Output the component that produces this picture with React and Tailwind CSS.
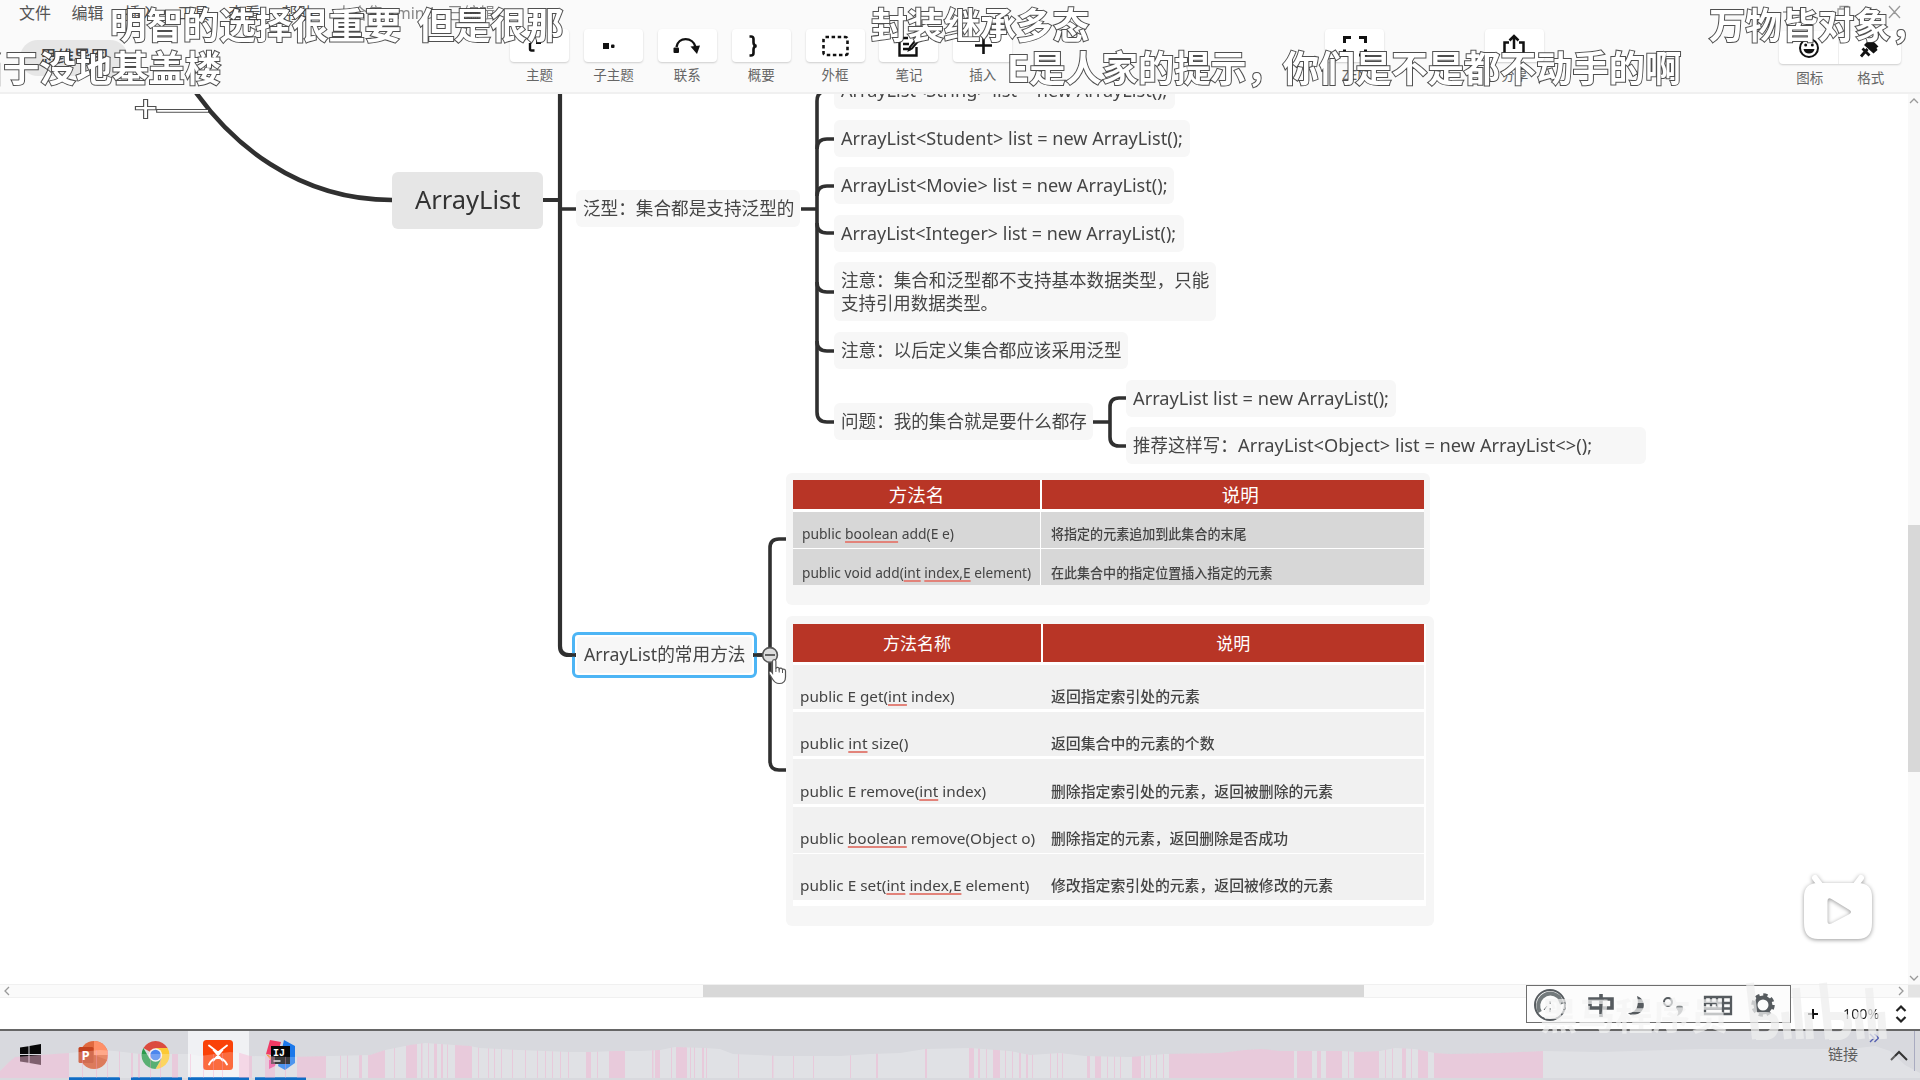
import { useLayoutEffect, useRef, useState } from "react";

/* Text squeezed or stretched horizontally to a given width. */
function Fit({ w, children, className = "" }) {
  const ref = useRef(null);
  const [scale, setScale] = useState(1);
  useLayoutEffect(() => {
    if (w && ref.current) setScale(w / ref.current.offsetWidth);
  }, [w]);
  return (
    <span className={`block ${className}`} style={{ width: w }}>
      <span ref={ref} className="inline-block origin-left whitespace-pre" style={{ transform: `scaleX(${scale})` }}>
        {children}
      </span>
    </span>
  );
}

const nodes = [
  { x: 834, y: 72, w: 341, h: 37, t: "ArrayList<String> list = new ArrayList();", tw: 326 },
  { x: 834, y: 120, w: 356, h: 37, t: "ArrayList<Student> list = new ArrayList();", tw: 342 },
  { x: 834, y: 167, w: 340, h: 37, t: "ArrayList<Movie> list = new ArrayList();", tw: 327 },
  { x: 834, y: 215, w: 350, h: 37, t: "ArrayList<Integer> list = new ArrayList();", tw: 335 },
  { x: 834, y: 332, w: 294, h: 37, t: "注意：以后定义集合都应该采用泛型", tw: 281 },
  { x: 834, y: 403, w: 259, h: 37, t: "问题：我的集合就是要什么都存", tw: 246 },
  { x: 576, y: 190, w: 224, h: 37, t: "泛型：集合都是支持泛型的", tw: 211 },
  { x: 1126, y: 380, w: 270, h: 37, t: "ArrayList list = new ArrayList();", tw: 256 },
];

function Node({ n }) {
  return (
    <div
      className="absolute flex items-center rounded-md bg-[#f7f7f7] pl-[7px] text-[17.8px] text-[#454545]"
      style={{ left: n.x, top: n.y, width: n.w, height: n.h }}
    >
      <Fit w={n.tw}>{n.t}</Fit>
    </div>
  );
}

function Links() {
  return (
    <svg className="absolute left-0 top-0" width="1908" height="984" fill="none" stroke="#303030" strokeWidth="3.6">
      <path strokeWidth="4.6" d="M190 82L197 94C230 140 295 200 392 200" />
      <path strokeWidth="4.2" d="M543 200H560M560 80V646Q560 655 569 655H576" />
      <path d="M560 209H576M801 209H817" />
      <path d="M834 91H827Q817 91 817 101V412Q817 422 827 422H834" />
      <path d="M817 149Q817 139 827 139H834M817 196Q817 186 827 186H834M817 223Q817 233 827 233H834M817 282Q817 292 827 292H834M817 341Q817 351 827 351H834" />
      <path d="M1093 422H1110M1126 398H1119Q1110 398 1110 407V437Q1110 446 1119 446H1126" />
      <path d="M753 655H770M786 539H779Q770 539 770 548V761Q770 770 779 770H786" />
    </svg>
  );
}

const U = ({ children }) => (
  <span className="underline decoration-[#e2837a] decoration-[1.5px] underline-offset-[2px]">{children}</span>
);

const addRows = [
  { w: 152, a: <>public <U>boolean</U> add(E e)</>, b: "将指定的元素追加到此集合的末尾", bw: 196, cls: "h-[36px] pt-[8px]" },
  { w: 229, a: <>public void add(<U>int</U> <U>index,E</U> element)</>, b: "在此集合中的指定位置插入指定的元素", bw: 222, cls: "h-[36px] pt-[10px]" },
];

const otherRows = [
  { w: 155, a: <>public E get(<U>int</U> index)</>, b: "返回指定索引处的元素", bw: 149, cls: "h-[44px] pt-[19px] mb-[3px]" },
  { w: 108, a: <>public <U>int</U> size()</>, b: "返回集合中的元素的个数", bw: 164, cls: "h-[44px] pt-[19px] mb-[3px]" },
  { w: 186, a: <>public E remove(<U>int</U> index)</>, b: "删除指定索引处的元素，返回被删除的元素", bw: 282, cls: "h-[45px] pt-[20px] mb-[3px]" },
  { w: 235, a: <>public <U>boolean</U> remove(Object o)</>, b: "删除指定的元素，返回删除是否成功", bw: 237, cls: "h-[46px] pt-[19px] mb-px" },
  { w: 229, a: <>public E set(<U>int</U> <U>index,E</U> element)</>, b: "修改指定索引处的元素，返回被修改的元素", bw: 282, cls: "h-[46px] pt-[19px]" },
];

function MethodTables() {
  return (
    <>
      <div className="absolute left-[786px] top-[473px] h-[132px] w-[644px] rounded-md bg-[#f6f6f6] pl-[7px] pt-[7px]">
        <div className="w-[631px] bg-white">
          <div className="mb-[3px] flex h-[29px] items-center gap-[1.5px] text-[18.5px] text-white">
            <div className="flex h-full w-[247px] items-center justify-center bg-[#b83526]">方法名</div>
            <div className="flex h-full flex-1 items-center justify-center bg-[#b83526] pl-[15px]">说明</div>
          </div>
          <div className="flex flex-col gap-px text-[13.5px] leading-[28px] text-[#444]">
            {addRows.map((r, i) => (
              <div key={i} className="flex gap-px">
                <div className={`w-[247px] bg-[#d7d7d7] pl-[9px] ${r.cls}`}><Fit w={r.w}>{r.a}</Fit></div>
                <div className={`flex-1 bg-[#d7d7d7] pl-[10px] font-medium ${r.cls}`}><Fit w={r.bw}>{r.b}</Fit></div>
              </div>
            ))}
          </div>
        </div>
      </div>
      <div className="absolute left-[786px] top-[616px] h-[310px] w-[648px] rounded-md bg-[#f6f6f6] pl-[7px] pt-[8px]">
        <div className="w-[633px] bg-white pb-[6px]">
          <div className="mb-[3px] flex h-[38px] items-center gap-[1.5px] pr-[2px] text-[17px] text-white">
            <div className="flex h-full w-[248px] items-center justify-center bg-[#b83526] pt-[2px]">方法名称</div>
            <div className="flex h-full flex-1 items-center justify-center bg-[#b83526] pt-[2px]">说明</div>
          </div>
          <div className="pr-[2px] text-[14.7px] leading-[24px] text-[#444]">
            {otherRows.map((r, i) => (
              <div key={i} className={`flex bg-[#f1f1f1] ${r.cls}`}>
                <div className="w-[250px] pl-[7px]"><Fit w={r.w}>{r.a}</Fit></div>
                <div className="flex-1 pl-[8px] font-medium"><Fit w={r.bw}>{r.b}</Fit></div>
              </div>
            ))}
          </div>
        </div>
      </div>
    </>
  );
}

function MindMap() {
  return (
    <div className="absolute left-0 top-[-94px] h-[984px] w-[1908px]">
      <Links />
      <div className="absolute left-[392px] top-[172px] flex h-[57px] w-[151px] items-center rounded-md bg-[#e6e6e6] pb-[2px] pl-[23px] text-[25px] text-[#333]">
        <Fit w={105}>ArrayList</Fit>
      </div>
      {nodes.map((n) => <Node key={n.t} n={n} />)}
      <div className="absolute left-[1126px] top-[427px] flex h-[37px] w-[520px] items-center rounded-md bg-[#f7f7f7] pl-[7px] text-[17.8px] text-[#454545]">
        <Fit w={105}>推荐这样写：</Fit>
        <Fit w={354}>{"ArrayList<Object> list = new ArrayList<>();"}</Fit>
      </div>
      <div className="absolute left-[834px] top-[262px] h-[59px] w-[382px] rounded-md bg-[#f7f7f7] pl-[7px] pt-[7px] text-[17.8px] leading-[23px] text-[#454545]">
        <Fit w={368}>注意：集合和泛型都不支持基本数据类型，只能</Fit>
        <Fit w={157}>支持引用数据类型。</Fit>
      </div>
      <div className="absolute left-[572px] top-[632px] flex h-[46px] w-[185px] rounded-md border-[3px] border-[#4db5f5] p-[2px]">
        <div className="flex flex-1 items-center rounded bg-[#f7f7f7] pb-[2px] pl-[7px] text-[17.8px] text-[#454545]">
          <Fit w={162}>ArrayList的常用方法</Fit>
        </div>
      </div>
      <MethodTables />
      <svg className="absolute left-[560px] top-[640px]" width="240" height="50" fill="none">
        <path d="M10 15H16M193 15H203" stroke="#303030" strokeWidth="3.4" />
        <circle cx="210" cy="15" r="7.4" fill="#dedede" stroke="#555" strokeWidth="1.6" />
        <path d="M205 15h10" stroke="#444" strokeWidth="1.6" />
        <g transform="translate(1.5 -1)">
          <path
            d="M211 22.5c0-2.6 3.4-2.6 3.4 0v7c.5-1.7 3.2-1.5 3.3.4.8-1.4 3.1-1 3.3.7.9-1 3-.5 3 1.3v6c0 4-2.3 6.6-6.4 6.6-3.5 0-5-1.6-6.6-4.5l-3.2-5.2c-1.2-2 1.2-3.3 2.500-1.7l.7 1z"
            fill="#fff" stroke="#555" strokeWidth="1.2"
          />
          <path d="M214.400 29v4M217.700 30v3.500M221 31v3" stroke="#555" />
        </g>
      </svg>
    </div>
  );
}

/* ---------- toolbar ---------- */
const Svg = ({ children, w = 30, h = 26, ...p }) => (
  <svg width={w} height={h} viewBox={`0 0 ${w} ${h}`} fill="none" stroke="#111" strokeWidth="2.4" {...p}>{children}</svg>
);

const tools = [
  ["主题", <Svg><path d="M5 10v6q0 1.500 1.500 1.500H9.500" /><rect x="11" y="7" width="5" height="4" fill="#111" stroke="none" /></Svg>],
  ["子主题", <Svg><rect x="5" y="10" width="6" height="6" fill="#111" stroke="none" /><rect x="13" y="11.500" width="3.500" height="3.500" rx="1" fill="#111" stroke="none" /></Svg>],
  ["联系", <Svg><rect x="1.500" y="14.500" width="5.500" height="5.500" rx="1" fill="#111" stroke="none" /><path d="M4.500 14C6 3.500 21 3.500 23.500 14" /><path d="M18.500 13.500l9.500-1-3 8.500z" fill="#111" stroke="none" /></Svg>],
  ["概要", <Svg><path d="M3.500 3.500H5q2.500 0 2.500 2.500v3.500q0 3 3 3.500-3 .5-3 3.500V20q0 2.500-2.500 2.500H3.500" strokeWidth="2.600" /></Svg>],
  ["外框", <Svg><rect x="3.500" y="4" width="24" height="18" rx="2" strokeWidth="2.600" strokeDasharray="3.500 2.600" /></Svg>],
  ["笔记", <Svg><path d="M14 5H5.500v17.500h17V14M9 11h6M9 16h8" /><path d="M24 4.500l-8 9.500-1 3 3-1.500 8-9.500" strokeWidth="2" /></Svg>],
  ["插入", <Svg><path d="M15.500 4v17M7 12.500h17" strokeWidth="2.600" /></Svg>],
];

function Tool({ label, icon }) {
  return (
    <div className="flex w-[59px] flex-col items-center">
      <div className="flex h-[33px] w-full items-center justify-center rounded-sm bg-white shadow-[0_1px_2px_rgba(0,0,0,0.18)]">{icon}</div>
      <div className="mt-[4px] text-[13.5px] leading-[18px] text-[#666]">{label}</div>
    </div>
  );
}

function Header() {
  return (
    <header className="h-[94px] border-b-[2px] border-[#f0f0f0] bg-[#fafafa]">
      <div className="flex h-[29px] items-start justify-between pl-[19px] pr-[19px] text-[16px] leading-[26px] text-[#555]">
        <div className="flex">
          <span className="w-[52.5px]">文件</span><span className="w-[53px]">编辑</span>
          <span className="w-[53px]">插入</span><span className="w-[51px]">工具</span>
          <span className="w-[53px]">查看</span><span className="w-[54px]">帮助</span>
          <Fit w={159} className="text-[#888]">大合集.xmind - 已编辑</Fit>
        </div>
        <svg className="mt-[5px]" width="120" height="14" fill="none" stroke="#999" strokeWidth="1.3">
          <path d="M2 7h11M108 1l11 12M119 1l-11 12M57 4h8v8h-8zM59 4V1.500h8V10h-2" />
        </svg>
      </div>
      <div className="flex">
        <div className="ml-[20px] mt-[11px] flex h-[36px] w-[108px] items-center justify-center rounded-full bg-[#e6e6e6] pb-[2px] text-[17px] font-medium text-[#444]">思维导图</div>
        <div className="ml-[382px] flex gap-[14.9px]">
          {tools.map(([label, icon]) => <Tool key={label} label={label} icon={icon} />)}
        </div>
        <div className="ml-[313px]">
          <Tool label="ZEN" icon={<Svg><path d="M4.500 10V4.500H11M19 4.500h6.500V10M25.500 16.500V22H19M11 22H4.500v-5.500" strokeWidth="3" /></Svg>} />
        </div>
        <div className="ml-[101px]">
          <Tool label="分享" icon={<Svg><path d="M9 9.500H4.500v12.500h19V9.500H19M14 16V3M9.500 7.500L14 3 18.500 7.500" strokeWidth="2.500" /></Svg>} />
        </div>
        <div className="ml-[235px] mt-[2px] w-[122px]">
          <div className="flex h-[33px] rounded-sm bg-white shadow-[0_1px_2px_rgba(0,0,0,0.18)]">
            <div className="flex w-[60px] items-center justify-center border-r border-[#eee]">
              <Svg w={24} h={24}><circle cx="12" cy="12" r="9" strokeWidth="2" /><path d="M6.500 13h11c-.8 6-10.200 6-11 0z" fill="#111" stroke="none" /><circle cx="8.700" cy="9" r="1.500" fill="#111" stroke="none" /><circle cx="15.300" cy="9" r="1.500" fill="#111" stroke="none" /></Svg>
            </div>
            <div className="flex flex-1 items-center justify-center">
              <Svg w={24} h={24}><path d="M13 3l7.500 7.500-2 1.500 1 2-4 3.500L6 9l4-4 2 .5z" fill="#111" stroke="none" /><path d="M9.500 13L3 20.500M4.500 12.500l7 7" strokeWidth="2.800" /></Svg>
            </div>
          </div>
          <div className="mt-[5px] flex text-[13.5px] leading-[18px] text-[#666]">
            <div className="w-[61px] text-center">图标</div><div className="flex-1 text-center">格式</div>
          </div>
        </div>
      </div>
    </header>
  );
}

/* ---------- taskbar ---------- */
const wave =
  "0,40 8,32 15,26 40,24 69,22 100,19 115,20 140,23 190,23 200,25 230,21 240,22 250,25 290,26 330,25 370,24 385,19 410,14 425,12 470,15 480,17 520,19 570,21 590,21 615,20 640,20 660,19 675,16 705,17 720,18 733,23 780,25 840,25 870,23 900,22 925,18 970,17 1010,20 1030,24 1060,22 1085,25 1130,26 1165,23 1220,22 1245,19 1262,18 1280,20 1340,20 1360,21 1380,20 1395,17 1415,18 1435,22 1450,23 1500,22 1543,20 1600,21 1700,18 1850,18 1875,15 1890,20 1905,34 1920,42 1920,47 0,47";
const pinks = [
  [0, 69], [82, 83], [96, 97], [107, 108], [119, 120], [131, 133], [138, 140], [150, 151], [160, 161], [172, 178], [190, 191], [203, 204], [213, 214], [222, 223], [239, 252], [265, 275], [285, 286], [297, 326], [340, 341], [347, 348],
  [359, 362], [368, 385], [394, 395], [406, 417], [421, 422.5], [428, 429], [434, 437], [441, 443], [447, 448], [455, 472], [478, 479], [488, 489], [494, 495], [501, 502], [512, 513], [525, 526], [537, 538], [545, 546], [552, 553], [560, 561], [568, 569], [586, 591], [597, 598], [609, 625],
  [652, 653.5], [655, 660], [671, 672], [676, 687], [690, 691], [694, 695], [702, 704], [706, 707], [738, 739], [772, 773.5], [793, 794], [813, 814], [850, 851], [876, 878], [925, 927], [969, 974], [978, 980], [986, 987], [993, 1000], [1005, 1006], [1012, 1013], [1019, 1021], [1026, 1028], [1032, 1033], [1050, 1051], [1057, 1058], [1062, 1063],
  [1087, 1090], [1095, 1101], [1107, 1108], [1114, 1115], [1120, 1121], [1132, 1141], [1144, 1145], [1150, 1151], [1156, 1157], [1163, 1164], [1169, 1294], [1297, 1312], [1317, 1321], [1326, 1342], [1348, 1349], [1354, 1379], [1385, 1386], [1392, 1393], [1402, 1406], [1411, 1412], [1418, 1428], [1434, 1543],
];

const TaskApp = ({ active, children }) => (
  <div className={active ? "flex h-[49px] w-[61px] flex-col items-center justify-between bg-[#f0f1f4] pt-[9px]" : "flex h-[49px] w-[51px] flex-col items-center justify-between pt-[9px]"}>
    {children}
    <div className="h-[3px] w-full bg-[#0f6cc4]" />
  </div>
);

function Taskbar() {
  return (
    <footer className="relative flex h-[49px] bg-[#d8d9de]">
      <div className="w-[69px] pl-[20px] pt-[13px]">
        <svg width="21" height="22" fill="#080808"><path d="M0 3.500l8.500-1.200V10H0zM9.500 2L21 0v10H9.500zM0 11h8.500v7.700L0 17.500zM9.500 11H21v10l-11.500-2z" /></svg>
      </div>
      <TaskApp>
        <svg className="-ml-[3px]" width="30" height="30">
          <circle cx="16" cy="15" r="14" fill="#e0693f" /><path d="M16 1a14 14 0 0 1 14 14H16z" fill="#ff9068" /><path d="M3 20a14 14 0 0 0 26 0l-13-5z" fill="#d2562f" />
          <rect x="0.500" y="7" width="15" height="16" rx="1.500" fill="#c4431f" />
          <text x="3.500" y="20" fontSize="13" fontWeight="700" fill="#fff" fontFamily="Open Sans">P</text>
        </svg>
      </TaskApp>
      <div className="w-[11px]" />
      <TaskApp>
        <svg className="-ml-[2px]" width="29" height="30" viewBox="0 0 29 30">
          <path d="M14.500 15L2.400 8A14 14 0 0 1 26.600 8z" fill="#db4c3f" />
          <path d="M14.500 8H26.600A14 14 0 0 1 14.500 29l6.100-10.500z" fill="#fcc934" />
          <path d="M2.400 8a14 14 0 0 0 12.100 21l6-10.500L14.500 15 8.500 18.500z" fill="#2a9a4c" />
          <circle cx="14.500" cy="15" r="6.700" fill="#f2f2f2" /><circle cx="14.500" cy="15" r="5.200" fill="#4c86ee" />
        </svg>
      </TaskApp>
      <div className="w-[6px]" />
      <TaskApp active>
        <svg className="-ml-[1.500px]" width="30" height="30"><rect width="30" height="30" rx="3.500" fill="#fa4208" /><path d="M6 5.500l9 7 9-7M6 24.500c2-4 5-6.500 9-6.500s7 2.500 9 6.500M10.500 20.500l9-10.500M19.500 20.500l-9-10.500" stroke="#fff" strokeWidth="1.900" fill="none" strokeLinecap="round" /></svg>
      </TaskApp>
      <div className="w-[6px]" />
      <TaskApp>
        <svg width="30" height="30">
          <path d="M4 0l11 2-4 14L0 14z" fill="#f03a64" /><path d="M0 14l8 4-2 4z" fill="#fb8b2e" /><path d="M18 0l11 6v17l-10 7-7-4z" fill="#1b78ea" /><path d="M3 20l8-2-2 8-6 3z" fill="#e8318c" />
          <rect x="5" y="6" width="19" height="18" fill="#060606" />
          <text x="7" y="15.500" fontSize="10" fontWeight="700" fill="#fff" fontFamily="Liberation Mono">IJ</text><path d="M7.500 21h7" stroke="#fff" strokeWidth="1.300" />
        </svg>
      </TaskApp>
      <div className="ml-auto flex pr-[12px] text-[15px] text-[#333]">
        <span className="pt-[12px]">链接</span>
        <svg className="ml-[9px]" width="41" height="40" fill="none">
          <path d="M3 3l4 4-4 4M7.500 3l4 4-4 4" stroke="#5560b0" strokeWidth="1.400" />
          <path d="M24 29l8-8 8 8" stroke="#333" strokeWidth="2" />
        </svg>
      </div>
      <svg className="absolute left-0 top-0" width="1920" height="49">
        <defs><clipPath id="wave"><polygon points={wave} /></clipPath></defs>
        <g clipPath="url(#wave)">
          <rect width="1920" height="49" fill="#fff" opacity="0.22" />
          {pinks.map(([a, b]) => <rect key={a} x={a} width={b - a} y="0" height="47" fill="rgb(246,160,200)" opacity="0.35" />)}
        </g>
        <path d="M1914.500 0v40" stroke="#a9abc0" />
      </svg>
    </footer>
  );
}

function ImeBar() {
  return (
    <div className="absolute left-[1526px] top-[985px] flex h-[38px] w-[265px] items-center border-[1.5px] border-[#6e6e6e] bg-[#fcfcfc]">
      <svg width="262" height="35" fill="none" stroke="#565b5f" strokeWidth="2.4">
        <circle cx="23" cy="18" r="15" strokeWidth="2" />
        <path d="M13 25a12 12 0 0 1 2-15q8-7 17 0l3 7" strokeWidth="4" stroke="#737a7c" />
        <path d="M17 23l3-4M23 14v3M23 21v4" strokeWidth="1" />
        <path d="M63 12h22v9H63zM74 7v23" strokeWidth="3.600" />
        <path d="M110 9c9 3 10 16-2 19-3 .6-6-.5-7-2 7 .5 12-7 9-17z" fill="#565b5f" stroke="none" />
        <circle cx="141" cy="15" r="4" strokeWidth="2" /><path d="M149 21a3.500 3.500 0 1 1 7 1q-1 5-6 7 2-3 1-5z" fill="#858a8c" stroke="none" />
        <path d="M178 10h26v17h-26zM178 16h26M178 21.500h26M184 10v12M190 10v12M196 10v17" strokeWidth="2.300" />
        <circle cx="236" cy="18" r="7.500" strokeWidth="4" /><circle cx="236" cy="18" r="10" strokeWidth="3.500" strokeDasharray="4.200 3.650" />
      </svg>
    </div>
  );
}

const outline =
  "font-bold text-white [paint-order:stroke_fill] [-webkit-text-stroke:2px_rgba(60,60,60,0.9)]";

const comments = [
  { x: 110, y: -3, w: 453, t: "明智的选择很重要  但是很那" },
  { x: 871, y: -3, w: 218, t: "封装继承多态" },
  { x: 1709, y: -3, w: 218, t: "万物皆对象，" },
  { x: -33, y: 40, w: 254, t: "当于没地基盖楼" },
  { x: 1007, y: 40, w: 674, t: "E是人家的提示，你们是不是都不动手的啊" },
  { x: 135, y: 96, w: 74, t: "十———", small: true },
];

export default function App() {
  return (
    <div className="relative flex h-[1080px] w-[1920px] flex-col overflow-hidden bg-white font-['Noto_Sans','Noto_Sans_CJK_SC',sans-serif]">
      <Header />
      <div className="flex h-[890px]">
        <main className="relative flex-1 overflow-hidden bg-white"><MindMap /></main>
        <aside className="flex w-[12px] flex-col items-center bg-[#f9f9f9]">
          <svg className="mt-[3px]" width="10" height="8" fill="none" stroke="#999" strokeWidth="1.3"><path d="M1 6l4-4 4 4" /></svg>
          <div className="mt-[420px] h-[247px] w-[12px] bg-[#d8d8d8]" />
          <svg className="mb-[2px] mt-auto" width="10" height="8" fill="none" stroke="#999" strokeWidth="1.3"><path d="M1 2l4 4 4-4" /></svg>
        </aside>
      </div>
      <div className="flex h-[14px] items-center border-y border-[#f0f0f0] bg-[#fafafa]">
        <svg className="ml-[3px]" width="8" height="10" fill="none" stroke="#999" strokeWidth="1.3"><path d="M6 1L2 5l4 4" /></svg>
        <div className="ml-[692px] h-full w-[661px] bg-[#d8d8d8]" />
        <svg className="ml-auto mr-[3px]" width="8" height="10" fill="none" stroke="#999" strokeWidth="1.3"><path d="M2 1l4 4-4 4" /></svg>
        <div className="h-full w-[12px] bg-[#e4e4e4]" />
      </div>
      <div className="flex h-[33px] items-center justify-end border-b-[2px] border-[#666] bg-white pr-[12px] text-[15px] text-[#222]">
        <svg className="mr-[24px]" width="12" height="12" stroke="#111" strokeWidth="2"><path d="M6 1v10M1 6h10" /></svg>
        <Fit w={36}>100%</Fit>
        <svg className="ml-[15px]" width="14" height="20" fill="none" stroke="#222" strokeWidth="2.2"><path d="M2.500 7L7 2.500 11.500 7M2.500 13L7 17.500 11.500 13" /></svg>
      </div>
      <Taskbar />
      <ImeBar />
      <div className="absolute left-[1540px] top-[994px] text-[37px] font-bold leading-[44px] text-[#f3f3f3]/70"><Fit w={188}>黑马程序员</Fit></div>
      <svg className="absolute left-[1744px] top-[980px]" width="144" height="64" fill="none" stroke="#ededed" strokeOpacity="0.75" strokeWidth="8">
        <path d="M6 3l6 56M10 36h12q10 0 9 10t-11 10h-8M41 32l3 27M52 8l4 51M64 32l2 27M79 3l6 56M83 36h12q10 0 9 10t-11 10h-8M114 32l3 27M125 8l4 51M137 32l2 27" />
      </svg>
      <svg className="absolute left-[1796px] top-[866px] drop-shadow-[0_1px_2px_rgba(0,0,0,0.4)]" width="84" height="84">
        <path d="M22 12l6 8M68 12l-6 8" transform="translate(-3 0)" stroke="#fff" strokeWidth="6" strokeLinecap="round" />
        <path fillRule="evenodd" fill="#fff" d="M22 17h40q14 0 14 14v26q0 16-14 16H22Q8 73 8 57V31q0-14 14-14zM31.500 35v20q0 4 4 2.500l18-9.500q3-2 0-4l-18-11q-4-2-4 2z" />
      </svg>
      {comments.map((c) => (
        <div
          key={c.t}
          className={`absolute ${outline} ${c.small ? "text-[18px] leading-[24px]" : "text-[36px] leading-[52px]"} font-['Noto_Sans_CJK_SC',sans-serif]`}
          style={{ left: c.x, top: c.y }}
        >
          <Fit w={c.w}>{c.t}</Fit>
        </div>
      ))}
    </div>
  );
}
